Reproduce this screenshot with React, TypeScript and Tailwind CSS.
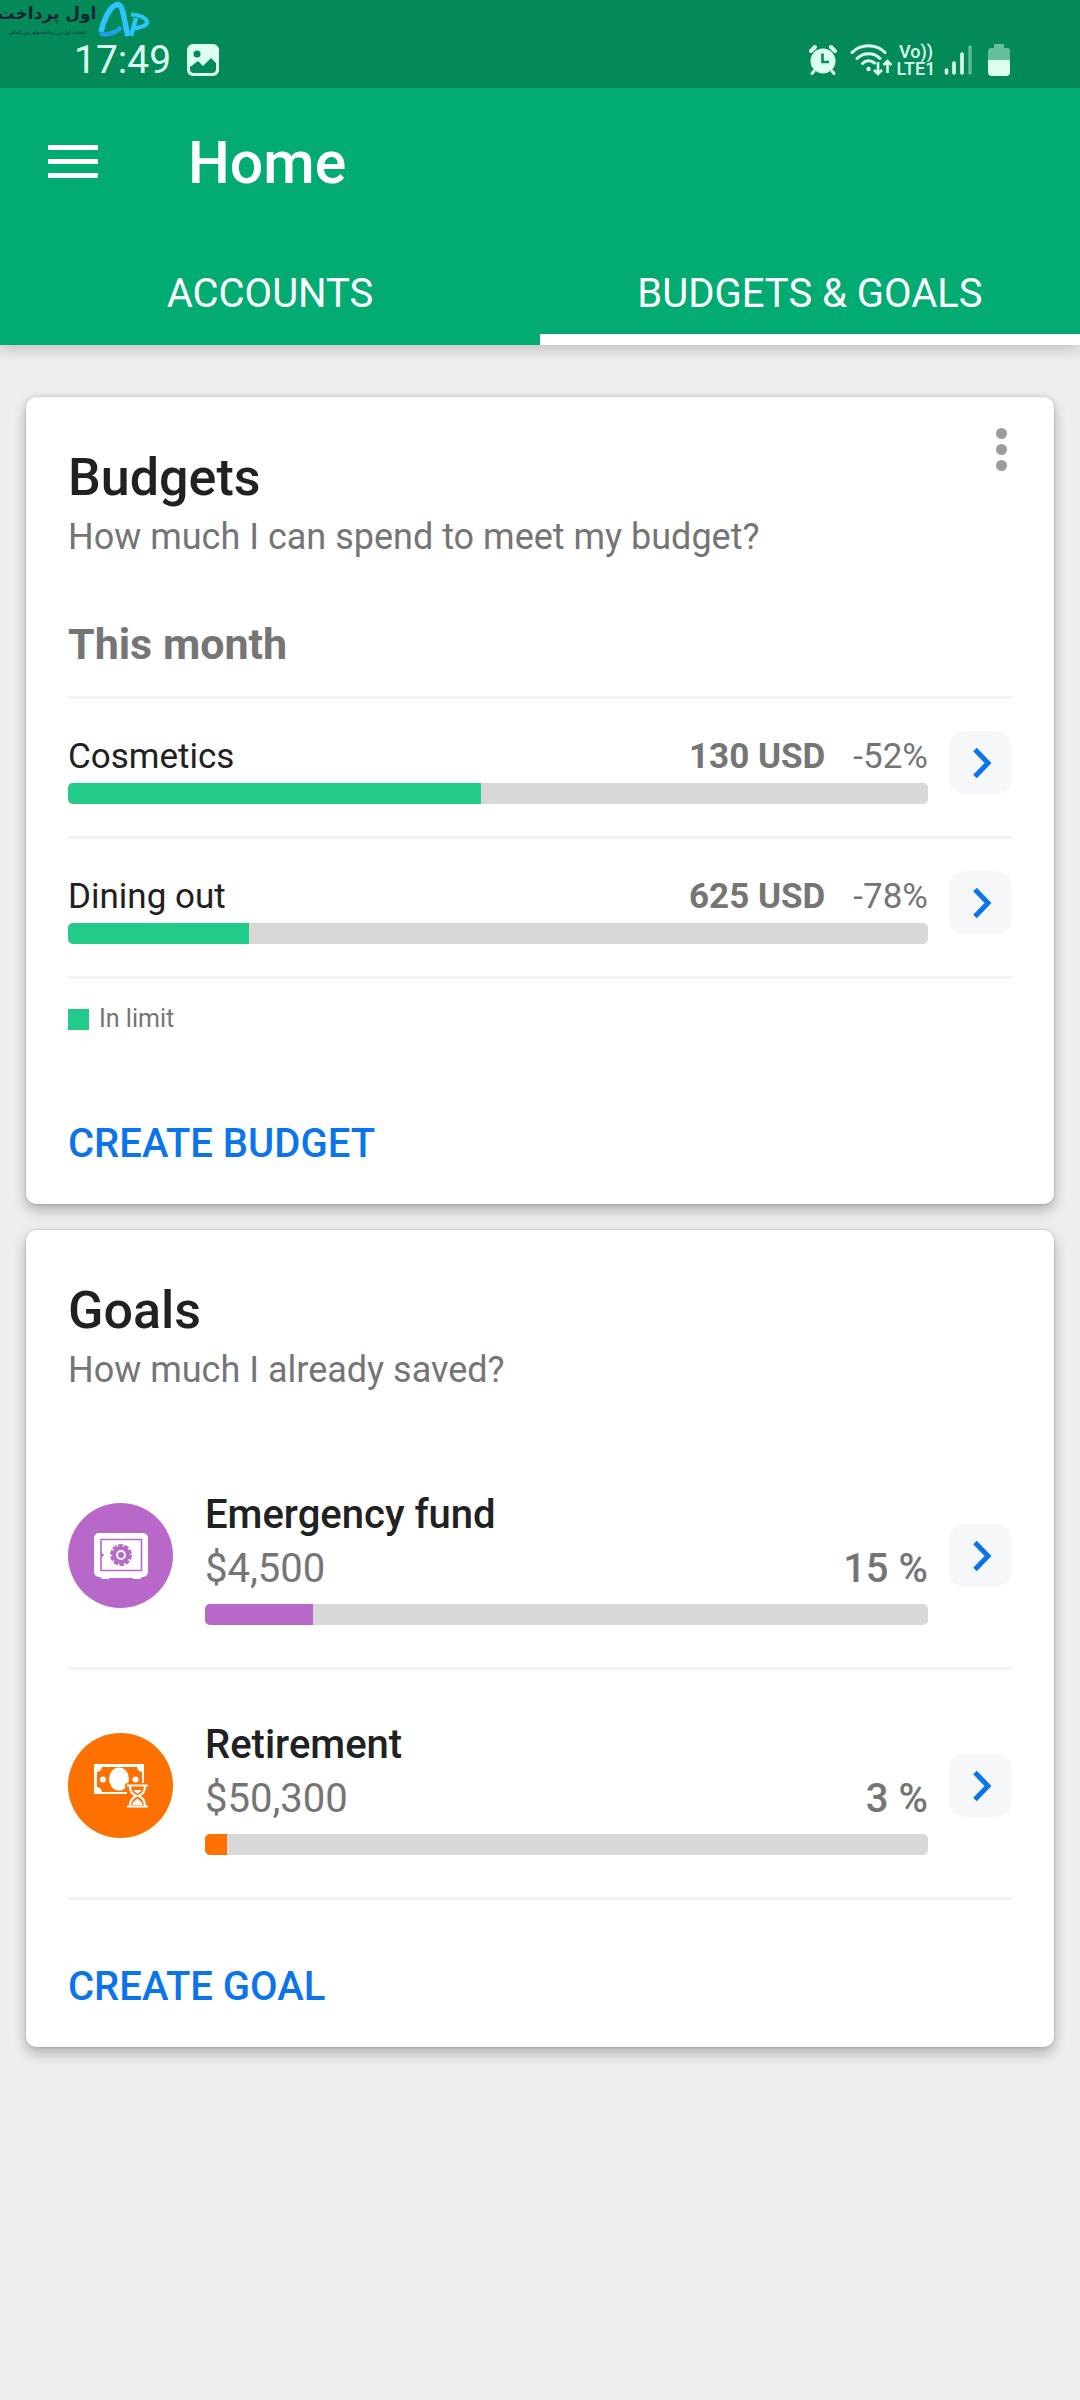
import { useState } from "react";
import type { ReactNode } from "react";

const budgets = [
  { name: "Cosmetics", amount: "130 USD", change: "-52%", fill: 48 },
  { name: "Dining out", amount: "625 USD", change: "-78%", fill: 21 },
];

function SafeIcon() {
  return (
    <svg viewBox="0 0 54 48" className="h-[48px] w-[54px]" aria-hidden="true">
      <path fill="#fff" d="M5 1h44a5 5 0 0 1 5 5v34a5 5 0 0 1-5 5h-1l-2 2h-6l-2-1H16l-2 1H8l-2-2H5a5 5 0 0 1-5-5V6a5 5 0 0 1 5-5z" />
      <path fill="none" stroke="#b868c8" strokeWidth="1.6" d="M7 7.500h40.500v31H7z" />
      <path fill="#b868c8" d="M7 20l3 3-3 3z" />
      <circle cx="27" cy="23" r="7" fill="none" stroke="#b868c8" strokeWidth="4" />
      <circle cx="27" cy="23" r="9.700" fill="none" stroke="#b868c8" strokeWidth="2.500" strokeDasharray="4.600 1.495" />
      <circle cx="27" cy="23" r="3" fill="#b868c8" />
    </svg>
  );
}

function MoneyTimeIcon() {
  return (
    <svg viewBox="0 0 54 46" className="h-[46px] w-[54px]" aria-hidden="true">
      <path fill="#fff" d="M0 1h50v20h-2V9a6 6 0 0 1-5-5H8a6 6 0 0 1-5 5v15a6 6 0 0 1 5 5h25v2H0z" />
      <circle cx="9" cy="16.500" r="3" fill="#fff" />
      <circle cx="41.500" cy="16.500" r="3" fill="#fff" />
      <ellipse cx="25" cy="16" rx="10" ry="11.500" fill="#fff" />
      <path fill="#fe7100" d="M31 23c0-2 1-3 3-3h20v26H33V26c-1 0-2-1-2-3z" />
      <path fill="none" stroke="#fff" strokeWidth="2.200" d="M33 22.500h21M33 43.500h21M36 23c0 6 2 7.500 6 10-4 2.500-6 4.500-6 10M51 23c0 6-2 7.500-6 10 4 2.500 6 4.500 6 10" />
      <path fill="#fff" d="M39 27h9l-4.500 4zM38.500 42c0-3 2.500-4 5-6.500 2.500 2.500 5 3.500 5 6.500z" />
    </svg>
  );
}

const goals = [
  { name: "Emergency fund", amount: "$4,500", percent: 15, circle: "bg-[#b868c8]", icon: <SafeIcon /> },
  { name: "Retirement", amount: "$50,300", percent: 3, circle: "bg-[#fe7100]", icon: <MoneyTimeIcon /> },
];

function BrandMark() {
  return (
    <svg viewBox="0 0 52 38" className="h-[38px] w-[52px] shrink-0" fill="none" aria-hidden="true">
      <path d="M3 32C5 21 12 5 20 4.500 25 4.500 26 20 30 36" stroke="#2cc4fb" strokeWidth="5.500" />
      <path d="M2 33c4 3 15 1 21-6" stroke="#1f9fe8" strokeWidth="4.500" />
      <path d="M33 36 38 18" stroke="#2cc4fb" strokeWidth="4.500" />
      <path d="M33 14.500c8 0 17 4 16 8.500-1 3-8 5-13 5.500" stroke="#2cc4fb" strokeWidth="4" />
    </svg>
  );
}

function Watermark() {
  return (
    <div className="absolute top-0 left-0 flex items-start gap-1 text-[#0d2436]">
      <div className="flex w-[94px] flex-col items-center whitespace-nowrap font-['DejaVu_Sans',sans-serif]" dir="rtl">
        <span className="text-[17px] leading-[27px] font-bold">اول پرداخت</span>
        <span className="text-[5px] leading-[10px]">انتخاب اول در پرداخت‌های بین المللی</span>
      </div>
      <BrandMark />
    </div>
  );
}

function StatusIcons() {
  return (
    <div className="flex items-center text-[#dcfff0]">
      <svg viewBox="0 0 30 32" className="h-8 w-[30px]" aria-label="Alarm set" role="img">
        <g stroke="currentColor" strokeLinecap="round" fill="none">
          <path strokeWidth="4" d="M3 7l4-4M27 7l-4-4" />
          <path strokeWidth="3" d="M6 27l-2 2.500M24 27l2 2.500" />
        </g>
        <circle cx="15" cy="17" r="12.500" fill="currentColor" />
        <path d="M14.500 9.500v8.500h6.500" fill="none" stroke="#048a58" strokeWidth="2.600" />
      </svg>
      <svg viewBox="0 0 42 34" className="ml-3 h-[34px] w-[42px]" fill="none" stroke="currentColor" strokeLinecap="round" aria-label="Wi-Fi" role="img">
        <path strokeWidth="3" d="M2 9.500c9-9 24-9 33 0M7 15.500c6.500-6.500 17-6.500 23 0M12.500 20.500c3.500-3.500 8.500-3.500 12-.5" />
        <circle cx="18.500" cy="26" r="2.200" fill="currentColor" stroke="none" />
        <path strokeWidth="2.600" strokeLinecap="butt" d="M28 19v12M24 27l4 4 4-4M37.500 30V18M33.500 22l4-4 4 4" />
      </svg>
      <div className="ml-1 flex w-[40px] flex-col items-center text-[18px] leading-[17px] font-medium">
        <span>Vo))</span>
        <span>LTE1</span>
      </div>
      <svg viewBox="0 0 28 32" className="ml-2 h-8 w-7" stroke="currentColor" strokeWidth="3.600" strokeLinecap="round" aria-label="Signal" role="img">
        <path d="M2.500 26v3M10 19v10M18 10v19" />
        <path d="M26 3v26" opacity=".4" />
      </svg>
      <svg viewBox="0 0 22 34" className="ml-4 h-[34px] w-[22px]" fill="currentColor" aria-label="Battery" role="img">
        <path opacity=".45" d="M6 1h10v4h3a3 3 0 0 1 3 3v9H0V8a3 3 0 0 1 3-3h3z" />
        <path d="M0 17h22v12a4 4 0 0 1-4 4H4a4 4 0 0 1-4-4z" />
      </svg>
    </div>
  );
}

function ProgressBar({ label, value, color }: { label: string; value: number; color: string }) {
  return (
    <div role="progressbar" aria-label={label} aria-valuenow={value} className="h-[21px] overflow-hidden rounded-[5px] bg-[#d8d8d8]">
      <div className={`h-full ${color}`} style={{ width: `${value}%` }} />
    </div>
  );
}

function OpenButton({ label }: { label: string }) {
  return (
    <button type="button" aria-label={label} className="flex size-[63px] shrink-0 items-center justify-center rounded-2xl bg-[#f5f7f9]">
      <svg viewBox="0 0 24 32" className="h-8 w-6" fill="none" stroke="#0b74e8" strokeWidth="5" aria-hidden="true">
        <path d="M6 2.500 19 16 6 29.500" />
      </svg>
    </button>
  );
}

function Card({ title, subtitle, children }: { title: string; subtitle: string; children: ReactNode }) {
  return (
    <section className="relative rounded-[10px] bg-white px-[42px] shadow-[0_6px_14px_rgba(0,0,0,0.28),0_0_3px_rgba(0,0,0,0.18)]">
      <h2 className="pt-[49px] text-[52px] leading-[63px] font-medium text-[#212121]">{title}</h2>
      <p className="text-[36px] leading-[56px] text-[#757575]">{subtitle}</p>
      {children}
    </section>
  );
}

export default function App() {
  const [tab, setTab] = useState(1);
  return (
    <div className="min-h-screen bg-[#eeeeee] font-[Roboto,sans-serif]">
      <header className="relative bg-[#02ab71] text-white shadow-[0_4px_14px_rgba(0,0,0,0.2)]">
        <div className="relative flex h-[88px] items-center justify-between bg-[#048a58] pt-8 pr-[70px] pl-[74px] text-[#dcfff0]">
          <Watermark />
          <div className="flex items-center gap-4">
            <span className="text-[39px] leading-[40px]">17:49</span>
            <svg viewBox="0 0 32 32" className="size-8" aria-label="Picture notification" role="img">
              <rect width="32" height="32" rx="6" fill="currentColor" />
              <circle cx="10" cy="10" r="3.500" fill="#048a58" />
              <path fill="#048a58" d="M3 23l8-6 5 5 8-8 5 5v6a4 4 0 0 1-4 4H7a4 4 0 0 1-4-4z" />
            </svg>
          </div>
          <StatusIcons />
        </div>
        <div className="flex h-[146px] items-center gap-[90px] px-12">
          <button type="button" aria-label="Open menu" className="flex w-[50px] flex-col gap-[9px]">
            <span className="h-[5px] bg-white" />
            <span className="h-[5px] bg-white" />
            <span className="h-[5px] bg-white" />
          </button>
          <h1 className="pt-1 text-[59px] leading-[68px] font-medium">Home</h1>
        </div>
        <div role="tablist" className="grid h-[111px] grid-cols-2">
          {["ACCOUNTS", "BUDGETS & GOALS"].map((name, i) => (
            <button
              key={name}
              type="button"
              role="tab"
              aria-selected={tab === i}
              onClick={() => setTab(i)}
              className={`border-b-[11px] pt-5 text-[40px] leading-[48px] ${tab === i ? "border-white" : "border-transparent"}`}
            >
              {name}
            </button>
          ))}
        </div>
      </header>

      <main className="flex flex-col gap-[26px] px-[26px] pt-[52px] pb-10">
        <Card title="Budgets" subtitle="How much I can spend to meet my budget?">
          <button type="button" aria-label="Budget options" className="absolute top-[31px] right-[47px] flex flex-col gap-[5px]">
            <span className="size-[11px] rounded-full bg-[#9b9b9b]" />
            <span className="size-[11px] rounded-full bg-[#9b9b9b]" />
            <span className="size-[11px] rounded-full bg-[#9b9b9b]" />
          </button>
          <h3 className="border-b-[3px] border-[#f4f4f4] pt-[53px] pb-[26px] text-[43px] leading-[52px] font-bold text-[#757575]">
            This month
          </h3>
          <ul>
            {budgets.map((b) => (
              <li key={b.name} className="flex h-[140px] items-start gap-[21px] border-b-[3px] border-[#f4f4f4] pt-8">
                <div className="min-w-0 flex-1 pt-1">
                  <div className="flex items-center gap-7 pb-1 text-[35px] leading-[44px] text-[#757575]">
                    <span className="flex-1 text-[#212121]">{b.name}</span>
                    <b>{b.amount}</b>
                    <span>{b.change}</span>
                  </div>
                  <ProgressBar label={b.name} value={b.fill} color="bg-[#22cb8a]" />
                </div>
                <OpenButton label={`Open ${b.name}`} />
              </li>
            ))}
          </ul>
          <div className="flex items-center gap-[10px] pt-6 text-[25px] leading-[32px] text-[#757575]">
            <span className="size-[21px] bg-[#22cb8a]" />
            In limit
          </div>
          <button type="button" className="mt-[85px] mb-[36px] block text-[40px] leading-[48px] font-medium text-[#0b74e8]">
            CREATE BUDGET
          </button>
        </Card>

        <Card title="Goals" subtitle="How much I already saved?">
          <ul className="pt-[42px]">
            {goals.map((g) => (
              <li key={g.name} className="flex h-[230px] items-start border-b-[3px] border-[#f4f4f4] pt-12">
                <div className={`mt-[15px] mr-8 flex size-[105px] shrink-0 items-center justify-center rounded-full ${g.circle}`}>
                  {g.icon}
                </div>
                <div className="min-w-0 flex-1">
                  <h3 className="text-[40px] leading-[54px] font-medium text-[#212121]">{g.name}</h3>
                  <div className="flex justify-between pb-2 text-[40px] leading-[54px] text-[#757575]">
                    <span>{g.amount}</span>
                    <span className="font-medium">{g.percent} %</span>
                  </div>
                  <ProgressBar label={g.name} value={g.percent} color={g.circle} />
                </div>
                <div className="mt-9 ml-[21px]">
                  <OpenButton label={`Open ${g.name}`} />
                </div>
              </li>
            ))}
          </ul>
          <button type="button" className="mt-[63px] mb-[36px] block text-[40px] leading-[48px] font-medium text-[#0b74e8]">
            CREATE GOAL
          </button>
        </Card>
      </main>
    </div>
  );
}
